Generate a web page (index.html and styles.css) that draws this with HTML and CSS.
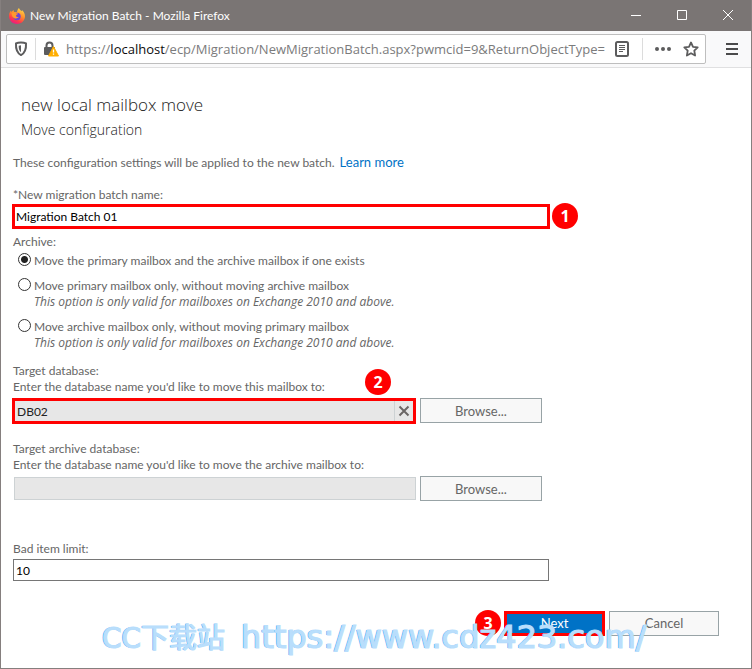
FILE: index.html
```html
<!DOCTYPE html>
<html lang="en">
<head>
    <meta charset="UTF-8">
    <meta name="viewport" content="width=device-width, initial-scale=1.0">
    <title>New Migration Batch</title>
    <link rel="stylesheet" href="styles.css">
</head>
<body>
    <div class="window">
        <header class="titlebar">
            <svg class="firefox" viewBox="0 0 16 16" width="16" height="16" aria-hidden="true">
                <defs>
                    <linearGradient id="fire" x1="0.8" y1="0" x2="0.3" y2="1">
                        <stop offset="0" stop-color="#ffe14a"/>
                        <stop offset="0.45" stop-color="#ff8a2a"/>
                        <stop offset="0.75" stop-color="#ff3b4a"/>
                        <stop offset="1" stop-color="#e5178c"/>
                    </linearGradient>
                </defs>
                <path fill="url(#fire)" d="M10 0c.4 1.400 1.600 2.200 2.700 3.200.3-.3.3-.7.2-1.100C14.700 3.500 16 6 16 8.300 16 12.600 12.500 16 8 16S0 12.600 0 8.300C0 6 .7 4 2 2.600c0 .6.1 1 .4 1.400C3 3.300 3.700 2.500 4.700 2c-.2.800 0 1.400.4 2H8c.3-1.700.8-3 2-4z"/>
                <circle cx="8" cy="8.500" r="3.700" fill="#6a45d8"/>
                <path fill="#ff9a2e" d="M2.600 5c1.700-.8 3.400-.6 4.500.2l2 .3c-.2 1-1.500 1-2 1.700-.3 1.400 1 2.300 2.600 1.900C8.600 11 5.500 11 4 9.300 3 8 2.600 6.400 2.600 5z"/>
            </svg>
            <span class="window-title">New Migration Batch - Mozilla Firefox</span>
            <div class="window-controls">
                <button type="button" aria-label="Minimize">
                    <svg viewBox="0 0 10 10" width="10" height="10"><path d="M0 5.500h10"/></svg>
                </button>
                <button type="button" aria-label="Maximize">
                    <svg viewBox="0 0 10 10" width="10" height="10"><path d="M.5.5h9v9h-9z"/></svg>
                </button>
                <button type="button" aria-label="Close">
                    <svg viewBox="0 0 10 10" width="10" height="10"><path d="M0 0l10 10M10 0L0 10"/></svg>
                </button>
            </div>
        </header>

        <nav class="toolbar">
            <div class="urlbar">
                <button type="button" class="icon-button shield" aria-label="Tracking protection">
                    <svg viewBox="0 0 14 16" width="14" height="16">
                        <path d="M7 1.500c2 0 3.800.3 5 .9.300 5-.4 9.300-5 11.700C2.400 11.700 1.700 7.400 2 2.400c1.200-.6 3-.9 5-.9z" fill="none" stroke="#5c5c5d" stroke-width="2" stroke-linejoin="round"/>
                        <path d="M7 4.300v6.900C5.100 9.600 4.600 7.500 4.700 4.700z" fill="#5c5c5d"/>
                    </svg>
                </button>
                <span class="divider"></span>
                <button type="button" class="icon-button lock" aria-label="Connection is not secure">
                    <svg viewBox="0 0 16 16" width="16" height="16">
                        <path d="M3.500 7V4.500a3 3 0 0 1 6 0V7" fill="none" stroke="#5c5c5d" stroke-width="2"/>
                        <rect x="1" y="6" width="11" height="8" rx="1" fill="#5c5c5d"/>
                        <path d="M10.500 5.500l5 9.500h-10z" fill="#ffae00" stroke="#ffae00" stroke-width="1" stroke-linejoin="round"/>
                        <path d="M10.500 8.500v3M10.500 12.500v1.300" stroke="#fff" stroke-width="1.300"/>
                    </svg>
                </button>
                <span class="address" role="textbox" aria-label="Address">https://<b>localhost</b>/ecp/Migration/NewMigrationBatch.aspx?pwmcid=9&amp;ReturnObjectType=</span>
                <button type="button" class="icon-button reader" aria-label="Reader view">
                    <svg viewBox="0 0 14 16" width="14" height="16">
                        <rect x="1" y="1" width="12" height="14" rx="1.500" fill="none" stroke="#5c5c5d" stroke-width="2"/>
                        <path d="M4 4.500h6M4 6.500h6M4 8.500h6M4 10.500h4" stroke="#5c5c5d"/>
                    </svg>
                </button>
                <span class="divider"></span>
                <button type="button" class="icon-button more" aria-label="Page actions">
                    <svg viewBox="0 0 16 16" width="16" height="16" fill="#5c5c5d">
                        <circle cx="2" cy="8" r="2"/><circle cx="8" cy="8" r="2"/><circle cx="14" cy="8" r="2"/>
                    </svg>
                </button>
                <button type="button" class="icon-button" aria-label="Bookmark this page">
                    <svg viewBox="0 0 16 16" width="16" height="16">
                        <path d="M8 1.500l2 4.300 4.700.6-3.400 3.300.8 4.800L8 12.200l-4.100 2.300.8-4.800L1.300 6.400 6 5.800z" fill="none" stroke="#5c5c5d" stroke-width="1.800" stroke-linejoin="round"/>
                    </svg>
                </button>
            </div>
            <button type="button" class="icon-button menu" aria-label="Open menu">
                <svg viewBox="0 0 12 12" width="12" height="12"><path d="M0 1h12M0 6h12M0 11h12" stroke="#4a4a4b" stroke-width="2"/></svg>
            </button>
        </nav>

        <main class="page">
            <h1>new local mailbox move</h1>
            <h2>Move configuration</h2>

            <form>
                <p class="intro">These configuration settings will be applied to the new batch. <a href="#">Learn more</a></p>

                <label for="batchName">*New migration batch name:</label>
                <div class="field-row">
                    <input type="text" id="batchName" class="text-input highlight" value="Migration Batch 01">
                    <span class="step">1</span>
                </div>

                <fieldset class="archive">
                    <legend>Archive:</legend>
                    <div class="option">
                        <input type="radio" name="archive" id="archiveBoth" checked>
                        <label for="archiveBoth">Move the primary mailbox and the archive mailbox if one exists</label>
                    </div>
                    <div class="option">
                        <input type="radio" name="archive" id="primaryOnly">
                        <label for="primaryOnly">Move primary mailbox only, without moving archive mailbox
                            <em>This option is only valid for mailboxes on Exchange 2010 and above.</em></label>
                    </div>
                    <div class="option">
                        <input type="radio" name="archive" id="archiveOnly">
                        <label for="archiveOnly">Move archive mailbox only, without moving primary mailbox
                            <em>This option is only valid for mailboxes on Exchange 2010 and above.</em></label>
                    </div>
                </fieldset>

                <section class="database">
                    <label for="targetDb">Target database:<br>Enter the database name you'd like to move this mailbox to:</label>
                    <span class="step step-over">2</span>
                    <div class="picker-row">
                        <div class="picker highlight">
                            <input type="text" id="targetDb" value="DB02" readonly>
                            <button type="button" class="clear" aria-label="Clear">
                                <svg viewBox="0 0 12 12" width="12" height="12"><path d="M1.500 1.500l9 9M10.500 1.500l-9 9" stroke="#6b6665" stroke-width="2"/></svg>
                            </button>
                        </div>
                        <button type="button" class="btn browse">Browse...</button>
                    </div>
                </section>

                <section class="database">
                    <label for="archiveDb">Target archive database:<br>Enter the database name you'd like to move the archive mailbox to:</label>
                    <div class="picker-row">
                        <div class="picker plain">
                            <input type="text" id="archiveDb" readonly>
                        </div>
                        <button type="button" class="btn browse">Browse...</button>
                    </div>
                </section>

                <section class="limit">
                    <label for="badItems">Bad item limit:</label>
                    <input type="text" id="badItems" class="text-input" value="10">
                </section>

                <div class="actions">
                    <span class="step">3</span>
                    <button type="submit" class="btn next highlight">Next</button>
                    <button type="button" class="btn cancel">Cancel</button>
                </div>
            </form>
        </main>

        <div class="watermark"><span>CC下载站</span><span class="site">https://www.cdz423.com/</span></div>
    </div>
</body>
</html>
```
FILE: styles.css
```css
* {
    box-sizing: border-box;
}
body {
    margin: 0;
    font-family: Lato, "Open Sans", sans-serif;
    font-size: 12px;
    line-height: 16px;
    color: #666;
    background: #fff;
}
button, input {
    font-family: inherit;
    font-size: inherit;
}
button {
    padding: 0;
}
.window {
    position: relative;
    min-height: 100vh;
    border: 1px solid #857f7e;
    border-top: 0;
}

/* Title bar */
.titlebar {
    display: flex;
    align-items: center;
    height: 31px;
    padding-left: 8px;
    background: #7a7574;
    color: #fff;
}
.window-title {
    flex: 1;
    margin-left: 5px;
}
.window-controls {
    display: flex;
}
.window-controls button {
    width: 46px;
    height: 31px;
    border: none;
    background: none;
}
.window-controls path {
    fill: none;
    stroke: #fff;
}

/* Toolbar */
.toolbar {
    display: flex;
    align-items: center;
    height: 37px;
    padding: 0 13px 0 5px;
    background: #f9f9fa;
    border-bottom: 1px solid #e0e0e1;
}
.urlbar {
    display: flex;
    align-items: center;
    flex: 1;
    min-width: 0;
    height: 30px;
    padding: 0 6px 0 7px;
    background: #fff;
    border: 1px solid #bebebe;
    border-radius: 2px;
}
.icon-button {
    display: flex;
    border: none;
    background: none;
}
.divider {
    width: 1px;
    height: 22px;
    background: #dcdcdc;
}
.shield {
    margin-right: 7px;
}
.lock {
    margin: 0 7px;
}
.address {
    flex: 1;
    min-width: 0;
    overflow: hidden;
    white-space: nowrap;
    font-family: "Open Sans", sans-serif;
    font-size: 13px;
    line-height: 22px;
    color: #7b7b7c;
}
.address b {
    font-weight: normal;
    color: #0c0c0d;
}
.reader {
    margin: 0 13px 0 4px;
}
.more {
    margin: 0 12px;
}
.menu {
    margin-left: 20px;
}

/* Page */
.page {
    padding: 25px 12px 32px;
}
h1, h2 {
    margin: 0 8px;
    font-family: "Open Sans", sans-serif;
    font-weight: 300;
    color: #222;
}
h1 {
    font-size: 17px;
    line-height: 24px;
}
h2 {
    margin-top: 3px;
    font-size: 14px;
    line-height: 20px;
}
.intro {
    margin: 14px 0 16px;
}
.intro a {
    margin-left: 2px;
    color: #0072c6;
    font-size: 13px;
    text-decoration: none;
}
label {
    display: block;
}
.field-row {
    display: flex;
    align-items: center;
    gap: 2px;
}
.field-row .text-input {
    margin-left: -1px;
    width: 100%;
    max-width: 538px;
}
.text-input {
    display: block;
    width: 100%;
    max-width: 536px;
    height: 22px;
    padding: 0 2px;
    border: 1px solid #767676;
    color: #000;
}
.text-input.highlight {
    height: 25px;
    padding: 0 1px;
}
.highlight {
    border: 3px solid #f00;
}
.step {
    flex: none;
    width: 26px;
    height: 26px;
    border-radius: 50%;
    background: #f00;
    color: #fff;
    font-family: "Open Sans", sans-serif;
    font-size: 16px;
    font-weight: bold;
    line-height: 26px;
    text-align: center;
}

/* Archive options */
.archive {
    margin: 5px 0 0;
    padding: 0;
    border: none;
}
.archive legend {
    padding: 0;
}
.option {
    display: flex;
    align-items: flex-start;
    margin-bottom: 9px;
    padding-left: 5px;
}
.option:first-of-type {
    margin-top: 3px;
}
.option:last-of-type {
    margin-bottom: 0;
}
.option input {
    appearance: none;
    flex: none;
    width: 13px;
    height: 13px;
    margin: 0 3px 0 0;
    border: 1px solid #333;
    border-radius: 50%;
    background: #fff;
}
.option input:checked {
    background: radial-gradient(circle, #222 0 3px, #fff 4px);
}
.option em {
    display: block;
    font-family: "Open Sans", sans-serif;
}

/* Database pickers */
.database {
    position: relative;
    margin-top: 12px;
    margin-bottom: 17px;
}
.step-over {
    position: absolute;
    top: 6px;
    left: 352px;
}
.picker-row {
    display: flex;
    align-items: flex-start;
    gap: 4px;
    min-height: 26px;
    margin-top: 3px;
    margin-left: -1px;
}
.picker {
    display: flex;
    flex: 0 1 404px;
    height: 26px;
    background: #e7e7e7;
}
.picker input {
    flex: 1;
    min-width: 0;
    padding: 0 2px;
    border: none;
    background: none;
    color: #222;
}
.picker.plain {
    flex-basis: 402px;
    height: 23px;
    margin: 1px 0 0 2px;
    border: 1px solid #cdd2d4;
}
.clear {
    display: flex;
    align-items: center;
    justify-content: center;
    width: 19px;
    border: none;
    border-left: 1px solid #cdd2d4;
    background: none;
}
.btn {
    height: 25px;
    border: 1px solid #98a3a6;
    background: #f8f8f8;
    color: #666;
    font-size: 13px;
}
.browse {
    width: 122px;
}
.limit {
    padding-top: 22px;
}
.limit .text-input {
    margin-top: 2px;
}

/* Footer buttons */
.actions {
    display: flex;
    align-items: center;
    justify-content: flex-end;
    gap: 4px;
    margin: 29px 20px 0 0;
}
.actions .step {
    margin-right: -1px;
}
.next {
    width: 101px;
    border: 3px solid #f00;
    background: #0072c6;
    color: #fff;
}
.cancel {
    width: 110px;
}

.watermark {
    position: absolute;
    bottom: 11px;
    left: 101px;
    display: flex;
    align-items: baseline;
    gap: 16px;
    font-family: "DejaVu Sans", "Noto Sans CJK SC", sans-serif;
    font-size: 28px;
    line-height: 36px;
    color: #b9defc;
    -webkit-text-stroke: 1px #b9defc;
    text-shadow: -1px 0 #3ba5ec;
    white-space: nowrap;
    pointer-events: none;
}
.watermark .site {
    font-size: 32px;
}
```
